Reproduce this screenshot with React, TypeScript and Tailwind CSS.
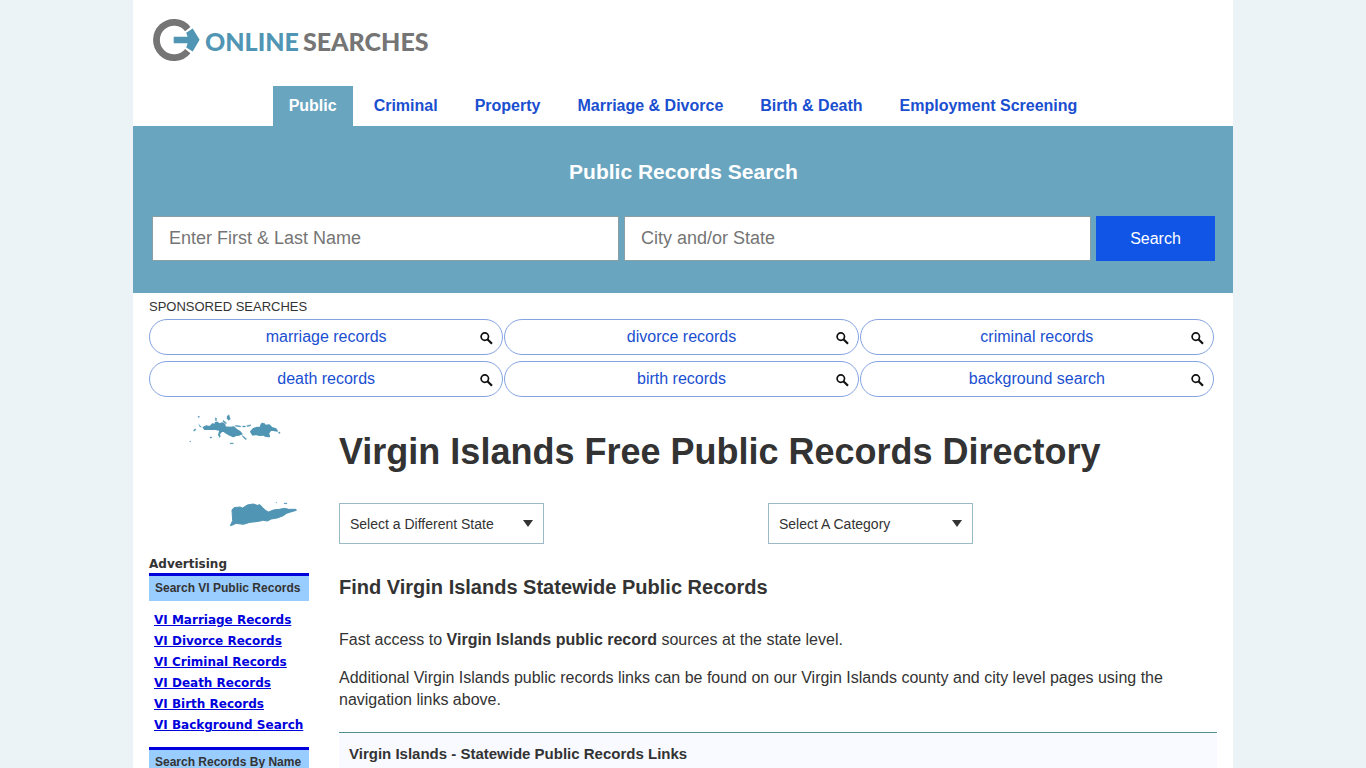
const tabs = [
  "Public",
  "Criminal",
  "Property",
  "Marriage & Divorce",
  "Birth & Death",
  "Employment Screening",
];

const sponsored = [
  "marriage records",
  "divorce records",
  "criminal records",
  "death records",
  "birth records",
  "background search",
];

const adLinks = [
  "VI Marriage Records",
  "VI Divorce Records",
  "VI Criminal Records",
  "VI Death Records",
  "VI Birth Records",
  "VI Background Search",
];

function Logo() {
  return (
    <a href="#" aria-label="Online Searches" className="flex items-center gap-1">
      <svg width="48" height="44" viewBox="0 0 48 44" aria-hidden>
        <path
          d="M34.8 11A17.6 17.6 0 1 0 34.8 33"
          fill="none"
          stroke="#757575"
          strokeWidth="6.8"
        />
        <path
          d="M20.7 18.8H34.6L33.2 14.8L39.7 10.4L46.6 21.8L39.7 33.4L33.2 29.4L34.6 25.2H20.7Z"
          fill="#5095b3"
        />
      </svg>
      <span className="flex gap-1 pt-0.5 font-['Lato',sans-serif] text-[25px] font-black leading-8">
        <span className="text-[#5095b3]">ONLINE</span>
        <span className="text-[#757575]">SEARCHES</span>
      </span>
    </a>
  );
}

function SearchIcon() {
  return (
    <svg
      width="13"
      height="13"
      viewBox="0 0 13 13"
      fill="none"
      stroke="#111"
      className="absolute right-[9px] top-3"
      aria-hidden
    >
      <circle cx="4.8" cy="4.6" r="3.7" strokeWidth="1.7" />
      <path d="M7.4 7.2L12 11.8" strokeWidth="2.2" />
    </svg>
  );
}

function IslandsMap() {
  return (
    <svg
      width="160"
      height="140"
      viewBox="0 0 160 140"
      fill="#5095b3"
      role="img"
      aria-label="Map of the Virgin Islands"
    >
      {/* St. Thomas, St. John and the cays around them */}
      <g transform="translate(31 -1) scale(0.3333)" stroke="#5095b3" strokeLinejoin="round">
        <path
          strokeWidth="4"
          d="M70 67L78 63L90 65L97 57L108 58L106 53L112 52L118 57L128 54L134 58L136 66L150 67L162 66L170 74L180 80L186 87L178 90L168 91L160 95L148 90L138 84L130 78L124 80L116 90L120 76L104 72L88 73L74 73Z"
        />
        <path
          strokeWidth="4"
          d="M212 80L220 71L232 67L240 68L244 58L252 56L256 61L268 60L276 68L288 72L292 78L280 76L272 76L266 84L268 95L258 94L250 90L238 91L228 88L218 90Z"
        />
        <path
          strokeWidth="1"
          d="M141 34L147 29L149 36L151 43L145 46L141 40ZM106 38L110 40L109 49L106 46ZM130 46L140 54L138 56L129 50ZM40 76L46 71L48 74L42 79ZM54 34H58V37H54ZM56 58L64 66H60ZM166 61L182 63V66L167 64ZM188 63H196V66H188ZM200 62L212 59V62L202 65ZM187 91L200 102L197 104L188 95ZM116 88L122 92L118 98ZM90 96H95V99H90ZM150 114H160V116H150ZM29 109H33V110H29ZM244 54H249V56H244ZM296 81H300V85H296Z"
        />
      </g>
      {/* St. Croix */}
      <g transform="translate(71 84) scale(0.3333)" stroke="#5095b3" strokeLinejoin="round">
        <path
          strokeWidth="3"
          d="M31 107L38 92L36 60L42 53L60 51L68 54L82 45L100 42L112 46L120 44L128 53L138 62L146 66L160 60L178 58L194 55L206 58L228 58L229 61L212 66L200 70L190 77L172 84L154 87L142 93L130 91L110 95L90 97L70 103L48 100L38 105Z"
        />
        <path d="M192 39H201V41H192ZM168 37H170V38H168Z" />
      </g>
    </svg>
  );
}

function AdHeading({ children }: { children: string }) {
  return (
    <h3 className="border-t-3 border-[#0000dd] bg-[#99ccff] px-1.5 py-1 font-['Liberation_Sans',Arial,sans-serif] text-xs font-bold leading-[17px]">
      {children}
    </h3>
  );
}

function Sidebar() {
  return (
    <aside className="w-40 shrink-0 pt-[9px] font-['DejaVu_Sans',Verdana,sans-serif]">
      <IslandsMap />
      <p className="mt-[9px] text-xs font-bold leading-[18px]">Advertising</p>
      <AdHeading>Search VI Public Records</AdHeading>
      <ul className="mb-[11px] mt-[9px] pl-[5px] text-xs font-bold leading-[21px] text-[#0000dd]">
        {adLinks.map((link) => (
          <li key={link} className="whitespace-nowrap">
            <a href="#" className="underline">
              {link}
            </a>
          </li>
        ))}
      </ul>
      <AdHeading>Search Records By Name</AdHeading>
    </aside>
  );
}

function Dropdown({ label }: { label: string }) {
  return (
    <div className="relative w-[205px]">
      <select
        aria-label={label}
        className="h-[41px] w-full appearance-none border border-[#9abbc6] bg-white pl-2.5 text-sm"
      >
        <option>{label}</option>
      </select>
      <svg
        width="10"
        height="7"
        viewBox="0 0 10 7"
        className="pointer-events-none absolute right-[11px] top-[17px]"
        aria-hidden
      >
        <path d="M0 0H10L5 7Z" fill="#333" />
      </svg>
    </div>
  );
}

export default function App() {
  return (
    <div className="min-h-screen bg-[#ebf3f6] font-['Liberation_Sans',Arial,sans-serif] text-[#333]">
      <div className="mx-auto min-h-screen max-w-[1100px] bg-white">
        <header>
          <div className="px-5 pt-[18px]">
            <Logo />
          </div>
          <nav className="mt-6 flex justify-center gap-[5px]">
            {tabs.map((tab, i) => (
              <a
                key={tab}
                href="#"
                className={
                  i === 0
                    ? "bg-[#69a5bf] px-4 text-base font-bold leading-10 text-white"
                    : "px-4 text-base font-bold leading-10 text-[#1a4fd0]"
                }
              >
                {tab}
              </a>
            ))}
          </nav>
        </header>

        <section className="bg-[#69a5bf] pb-8 pl-[19px] pr-[18px] pt-8">
          <h2 className="text-center text-[21px] font-bold leading-7 text-white">
            Public Records Search
          </h2>
          <form className="mt-[30px] flex gap-[5px]">
            <input
              type="text"
              aria-label="First and last name"
              placeholder="Enter First & Last Name"
              className="h-[45px] min-w-0 flex-1 border border-[#8a9ea6] bg-white px-4 text-lg placeholder:text-[#757575]"
            />
            <input
              type="text"
              aria-label="City or state"
              placeholder="City and/or State"
              className="h-[45px] min-w-0 flex-1 border border-[#8a9ea6] bg-white px-4 text-lg placeholder:text-[#757575]"
            />
            <button type="button" className="h-[45px] w-[119px] bg-[#1155e6] text-base text-white">
              Search
            </button>
          </form>
        </section>

        <section className="pl-4 pr-[19px] pt-[5px]">
          <h2 className="text-[13px] leading-[18px]">SPONSORED SEARCHES</h2>
          <div className="mt-[3px] grid grid-cols-3 gap-x-px gap-y-1.5">
            {sponsored.map((item) => (
              <a
                key={item}
                href="#"
                className="relative rounded-full border border-[#84a3e0] text-center text-base leading-[34px] text-[#1a4fd0]"
              >
                {item}
                <SearchIcon />
              </a>
            ))}
          </div>
        </section>

        <div className="flex gap-[30px] pl-4 pr-4">
          <Sidebar />
          <main className="min-w-0 flex-1 pt-[33px]">
            <h1 className="text-4xl font-bold leading-[44px]">
              Virgin Islands Free Public Records Directory
            </h1>
            <div className="mr-5 mt-[29px] grid grid-cols-2">
              <Dropdown label="Select a Different State" />
              <Dropdown label="Select A Category" />
            </div>
            <h2 className="mt-[31px] text-xl font-bold leading-6">
              Find Virgin Islands Statewide Public Records
            </h2>
            <p className="mt-[30px] text-base leading-[22px]">
              Fast access to <strong>Virgin Islands public record</strong> sources at the state
              level.
            </p>
            <p className="mt-4 text-base leading-[22px]">
              Additional Virgin Islands public records links can be found on our Virgin Islands
              county and city level pages using the navigation links above.
            </p>
            <div className="mt-[21px] border-t border-[#4f8f92] bg-[#f8faff] px-2.5 py-3">
              <h3 className="text-[15px] font-bold leading-[18px]">
                Virgin Islands - Statewide Public Records Links
              </h3>
            </div>
          </main>
        </div>
      </div>
    </div>
  );
}
